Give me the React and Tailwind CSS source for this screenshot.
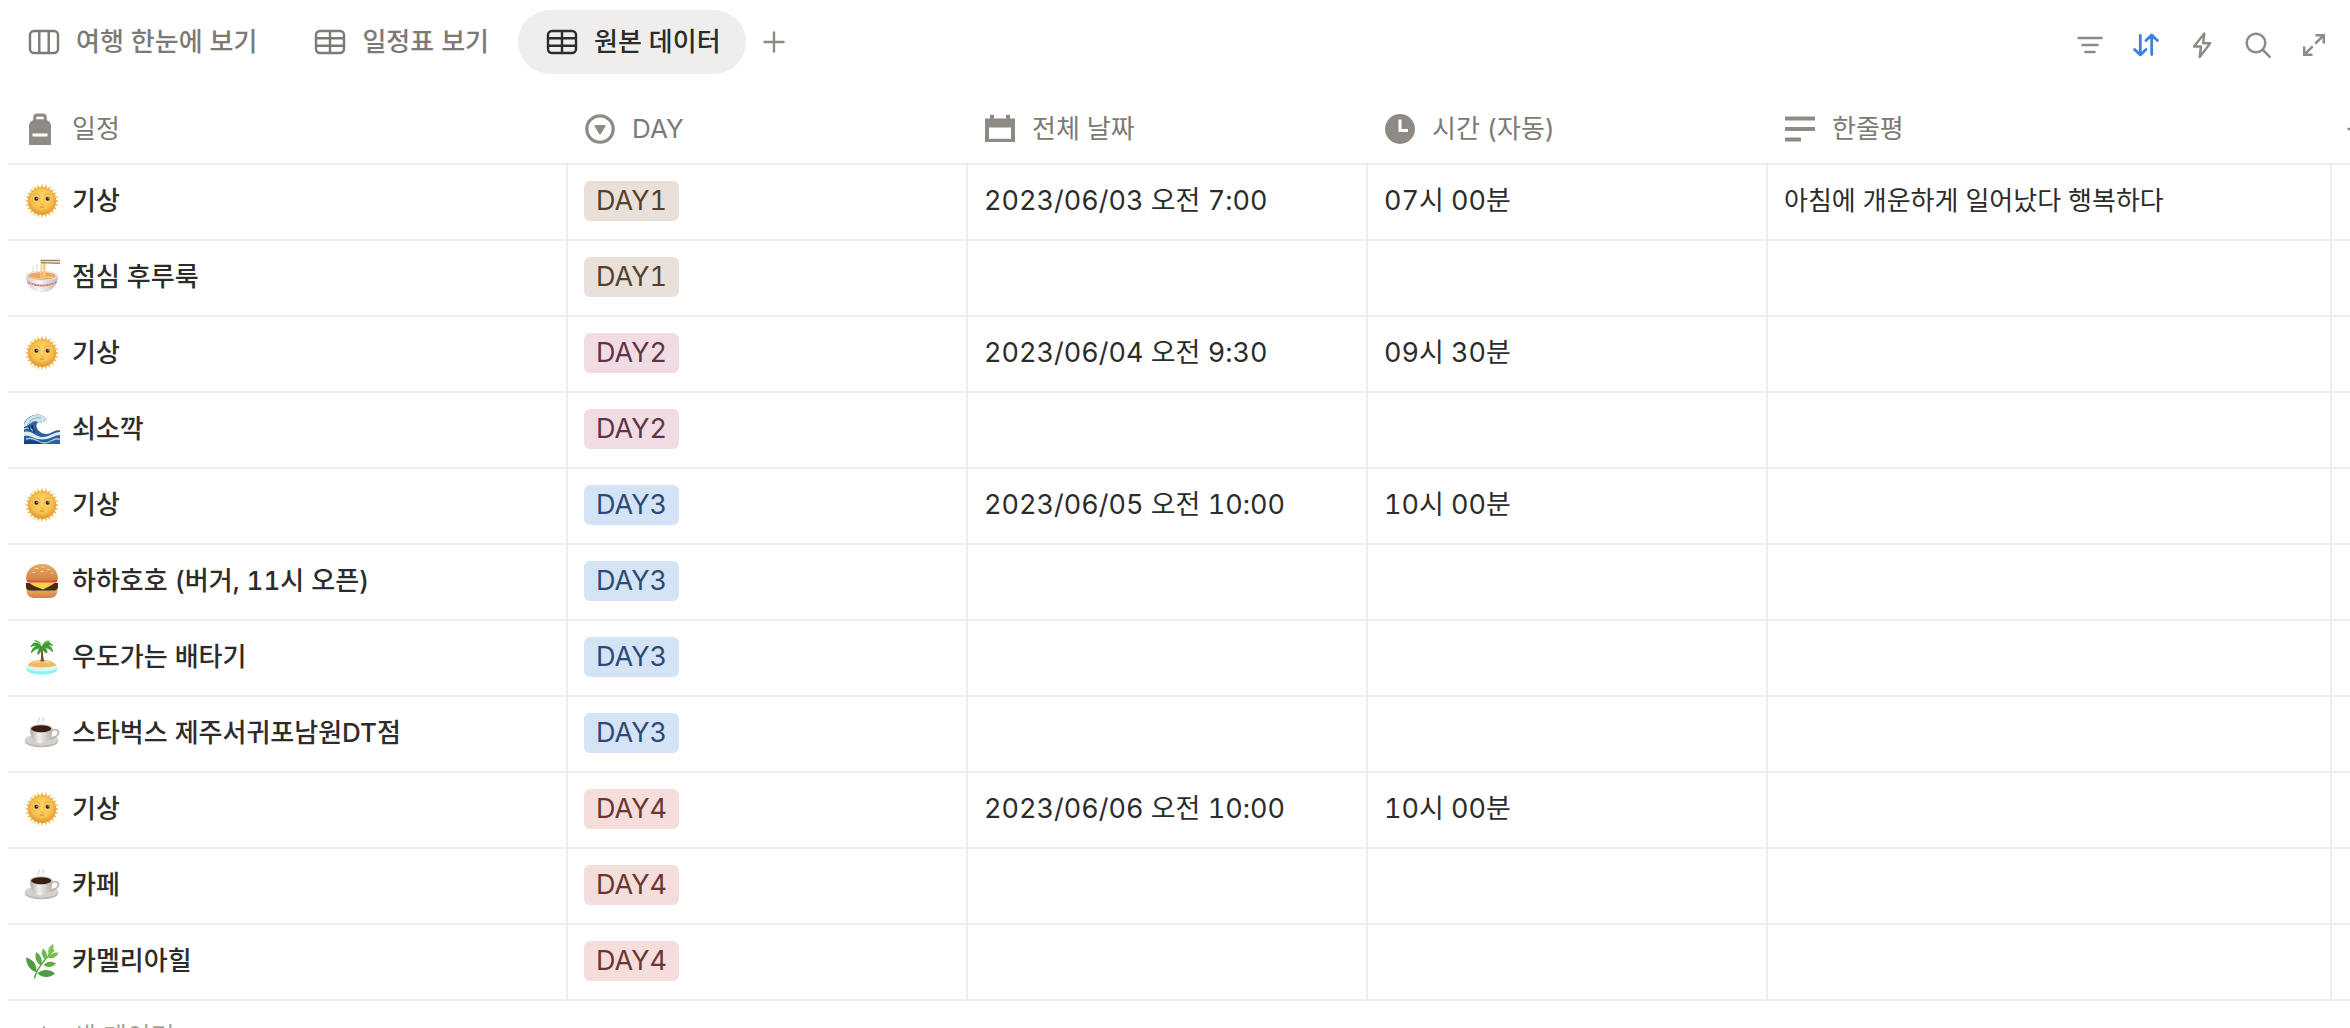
import { useState } from "react";

// ---------- VIEW TAB ICONS ----------
const BoardIcon = () => (
    <svg className="size-8 shrink-0" viewBox="0 0 32 32" fill="none" stroke="currentColor" strokeWidth="2.4">
        <rect x="2" y="5" width="28" height="22" rx="4" />
        <path d="M11.3 5v22M20.7 5v22" />
    </svg>
);

const TableIcon = () => (
    <svg className="size-8 shrink-0" viewBox="0 0 32 32" fill="none" stroke="currentColor" strokeWidth="2.4">
        <rect x="2" y="5" width="28" height="22" rx="4" />
        <path d="M2 12.3h28M2 19.7h28M16 5v22" />
    </svg>
);

const PlusIcon = () => (
    <svg className="size-6 shrink-0" viewBox="0 0 24 24" fill="none" stroke="currentColor" strokeWidth="2.4" strokeLinecap="round">
        <path d="M12 2.5v19M2.5 12h19" />
    </svg>
);

// ---------- TOOLBAR ICONS ----------
const FilterIcon = () => (
    <svg className="size-8" viewBox="0 0 32 32" fill="none" stroke="currentColor" strokeWidth="2.6" strokeLinecap="round">
        <path d="M4.5 9h23M8.5 16h15M11.500 23h9" />
    </svg>
);

const SortIcon = () => (
    <svg className="size-8" viewBox="0 0 32 32" fill="none" stroke="currentColor" strokeWidth="2.8" strokeLinecap="round" strokeLinejoin="round">
        <path d="M10.300 6.500v19M4.600 20.500l5.700 5.400 5.700-5.400M21.700 25.500v-19M16 11.500l5.700-5.400 5.700 5.400" />
    </svg>
);

const BoltIcon = () => (
    <svg className="size-8" viewBox="0 0 32 32" fill="none" stroke="currentColor" strokeWidth="2.4" strokeLinejoin="round">
        <path d="M18.300 4.500L8 17.500h7l-1.300 10.500L24.200 14.200h-7z" />
    </svg>
);

const SearchIcon = () => (
    <svg className="size-8" viewBox="0 0 32 32" fill="none" stroke="currentColor" strokeWidth="2.5" strokeLinecap="round">
        <circle cx="14" cy="14" r="9.300" />
        <path d="M21 21l6.800 6.800" />
    </svg>
);

const ExpandIcon = () => (
    <svg className="size-8" viewBox="0 0 32 32" fill="none" stroke="currentColor" strokeWidth="2.500">
        <path d="M17.500 6.200h8.300v8.300M25.500 6.500l-8.200 8.200M14.500 25.800H6.200v-8.300M6.500 25.500l8.200-8.200" />
    </svg>
);

// ---------- COLUMN ICONS ----------
const BagIcon = () => (
    <svg className="size-8 shrink-0" viewBox="0 0 32 32" fill="#8f8b84">
        <path
            fillRule="evenodd"
            d="M5 32V12.500c0-2 1.200-3.500 3-4.800L9.200 7V4.500C9.200 2 11 .5 13 .5h6c2.300 0 3.800 1.600 3.800 4V7l1.200.7c1.800 1.300 3 2.800 3 4.800V32zM12.200 6.300h7.600V4.800c0-.7-.3-1-1-1h-5.600c-.7 0-1 .3-1 1zM8.500 20.500v3h15v-3z"
        />
    </svg>
);

const SelectIcon = () => (
    <svg className="size-8 shrink-0" viewBox="0 0 32 32" fill="none" stroke="#8f8b84" strokeWidth="3.2">
        <circle cx="16" cy="16" r="13.200" />
        <path d="M11.500 13h9L16 20.500z" fill="#8f8b84" strokeWidth="2" strokeLinejoin="round" />
    </svg>
);

const CalendarIcon = () => (
    <svg className="size-8 shrink-0" viewBox="0 0 32 32" fill="#8f8b84">
        <path fillRule="evenodd" d="M1 5.500h5V1.800h4v3.700h12V1.800h4v3.700h5V29H1zM5 14.500V25.800h22V14.500z" />
    </svg>
);

const ClockIcon = () => (
    <svg className="size-8 shrink-0" viewBox="0 0 32 32">
        <circle cx="16" cy="16" r="15" fill="#8f8b84" />
        <path d="M16 6.500v11h8" fill="none" stroke="#fff" strokeWidth="3" />
    </svg>
);

const TextIcon = () => (
    <svg className="size-8 shrink-0" viewBox="0 0 32 32" fill="none" stroke="#8f8b84" strokeWidth="3.800">
        <path d="M1 5.500h30M1 16h30M1 26.500h16" />
    </svg>
);

// ---------- PAGE EMOJI ----------
const rays = Array.from({ length: 24 }, (_, i) => i * 15);

const Sun = () => (
    <svg className="size-9 shrink-0" viewBox="0 0 36 36">
        <defs>
            <radialGradient id="sunFace" cx="50%" cy="42%" r="55%">
                <stop offset="0" stopColor="#fddc70" />
                <stop offset="0.7" stopColor="#f8c04c" />
                <stop offset="1" stopColor="#e39a38" />
            </radialGradient>
        </defs>
        {rays.map((deg) => (
            <path key={deg} d="M16.300 5.500L18 .8l1.700 4.700z" fill="#f4b848" transform={`rotate(${deg} 18 18)`} />
        ))}
        <circle cx="18" cy="18" r="13.600" fill="url(#sunFace)" stroke="#e0a044" strokeWidth="0.600" />
        <path d="M9 12.300c1.500-1.600 4.500-1.800 6.200-.4.900 1.500 1 4.500.8 7.500M27 12.300c-1.500-1.600-4.500-1.800-6.200-.4-.9 1.500-1 4.500-.8 7.500" fill="none" stroke="#dfa040" strokeWidth="0.800" />
        <circle cx="12.400" cy="15.800" r="2" fill="#2b2530" />
        <circle cx="23.600" cy="15.800" r="2" fill="#2b2530" />
        <circle cx="13" cy="15.200" r="0.600" fill="#fff" />
        <circle cx="24.200" cy="15.200" r="0.600" fill="#fff" />
        <path d="M16.500 20.800q1.500.8 3 0" fill="none" stroke="#dc9a3c" strokeWidth="0.700" />
        <path d="M15.300 23.800q2.700-.8 5.400 0-2.700 2.400-5.400 0z" fill="#dd9044" />
    </svg>
);

const Noodles = () => (
    <svg className="size-9 shrink-0" viewBox="0 0 36 36">
        <defs>
            <linearGradient id="bowl" x1="0" y1="0" x2="1" y2="0">
                <stop offset="0" stopColor="#c9c9cc" />
                <stop offset="0.400" stopColor="#f7f7f8" />
                <stop offset="1" stopColor="#bdbdc1" />
            </linearGradient>
        </defs>
        <path d="M9 13c-2-2 2-3 0-6M13 11c-2-2 1-3 0-6" fill="none" stroke="#dededf" strokeWidth="1.300" />
        <path d="M2 16.500C2 27 9 33.500 18 33.500S34 27 34 16.500z" fill="url(#bowl)" />
        <ellipse cx="18" cy="16.500" rx="16" ry="4.800" fill="#e5e5e7" />
        <ellipse cx="18" cy="17" rx="13.800" ry="3.800" fill="#f0a565" />
        <path d="M6 18q6 2.500 12 1t12-.5" fill="none" stroke="#f8c98b" strokeWidth="1.200" />
        <path d="M3 22q15 7.500 30 0l-.4 2q-14.600 7.200-29.200 0z" fill="#d0706b" />
        <path d="M3.500 23q14.500 7.300 29 0" fill="none" stroke="#f3d3cf" strokeWidth="0.900" strokeDasharray="1.500 1.500" />
        <path d="M17.500 2.500l-.6 16M19.400 2.500l.2 17M21 3l-.3 14" fill="none" stroke="#f0d274" strokeWidth="1.500" />
        <path d="M16.500.8H36v1.500H16.500zM17 3l19 .4V5l-19-.8z" fill="#a4805a" />
    </svg>
);

const Wave = () => (
    <svg className="size-9 shrink-0" viewBox="0 0 36 36">
        <path d="M0 33V12C4 5 11 2.500 16.500 4c3.500 1 6 3 6.500 5.500l-3-1 1.500 3-4-2 .5 2.700-3.500-1.200c-3 2-2.500 6 .5 9 4 4 9.500 3.500 13.500 1 3-1.700 5.500-2 7.500-1.500V33z" fill="#2d5f9e" />
        <path d="M0 13C4 5.500 10 3 16.500 4c3.500 1 6 3 6.500 5.500l-3-1 1.500 3-4-2 .5 2.700-3.500-1.200c-2.500-1-5-1-7 1C5 13.500 3 15 0 16z" fill="#cfe3e8" />
        <path d="M5 10.500q6-5 12-3.500M3 14q3-3 7-3.700" fill="none" stroke="#7fa9b8" strokeWidth="0.900" />
        <path d="M0 21c4-1 7 0 11 2.500S19 27 24 25s8-4 12-4v3c-5 0-8 3-13 4S13 28.500 9 26.500 3 24.500 0 25z" fill="#d9ecef" />
        <path d="M0 18c3-1.500 6-1 9 1.500M2 28q6-2 12 2t13 0 9-1" fill="none" stroke="#a9cede" strokeWidth="1.400" />
        <path d="M0 30q8-2 15 1l4 2H0z" fill="#163f7e" />
        <path d="M8 14c0 3 1 5 3.500 7.500M5 15.500c0 2 1 3.500 2 4.500" fill="none" stroke="#16376b" strokeWidth="1.400" />
    </svg>
);

const Burger = () => (
    <svg className="size-9 shrink-0" viewBox="0 0 36 36">
        <defs>
            <linearGradient id="bun" x1="0" y1="0" x2="0" y2="1">
                <stop offset="0" stopColor="#eda865" />
                <stop offset="1" stopColor="#cf8044" />
            </linearGradient>
        </defs>
        <path d="M2.500 27c0 5 3 8 8 8h15c5 0 8-3 8-8z" fill="url(#bun)" />
        <path d="M1.500 25l3 3.500 3-1.500 3.500 2.500 3.500-2 3.500 2.500 3.500-2.500 3.500 2 3.500-2.500 3 1.500 3-3.500z" fill="#8cc850" />
        <path d="M2 20h32v4c0 2-2 3.500-4 3.500H6c-2 0-4-1.500-4-3.500z" fill="#4d2718" />
        <path d="M3 18.500h30L26 23l-7 3.500L10 23z" fill="#fcd045" />
        <rect x="2.500" y="16" width="31" height="3.500" rx="1.700" fill="#dc5540" />
        <path d="M2 16.500C2 7 8.500 1 18 1s16 6 16 15.500c-9 1.800-23 1.800-32 0z" fill="url(#bun)" />
        <path d="M12 5.500h1.600M18 4h1.600M23.500 6.500h1.600M17 8.500h1.600M9 9.500h1.600M27 10h1.600" stroke="#f9dfae" strokeWidth="1.200" strokeLinecap="round" />
    </svg>
);

const Island = () => (
    <svg className="size-9 shrink-0" viewBox="0 0 36 36">
        <ellipse cx="18" cy="30" rx="15.500" ry="5.800" fill="#8af3f3" />
        <ellipse cx="18" cy="28" rx="15" ry="4.500" fill="#d2faf6" />
        <path d="M3.500 26.500c3-4.500 9-5.500 14.500-5.500s11.500 1 14.500 5.500c-8 2.500-21 2.500-29 0z" fill="#f3b65a" />
        <path d="M9 24q9-3 17 0" fill="none" stroke="#fbd796" strokeWidth="1.300" />
        <path d="M16.700 8h2.300c-.5 5 .2 10 1.300 14.500h-3.800c.8-5 .8-10 .2-14.500z" fill="#76512f" />
        <path d="M17.500 8C14 2.500 9 3 7 7.500c3-1.500 5-1.500 7-.5-3 0-6 2.500-6.500 6.500 3-3 5.500-4.500 8.500-4.500-1.500 1.500-2.500 4-2 6.500 2.500-2 3.500-4.500 4-7 1 3 2.500 4.500 5 5.500 0-2.500-1-4.500-2.500-5.500 3 0 5.500 1.500 8 4-.5-4-3-6.500-6-6.500 2-1 4-.5 6 .8C27 3 21.500 1.500 17.500 8z" fill="#3f9a35" stroke="#3f9a35" strokeWidth="1" />
        <path d="M17.500 7C17 3 13 0 9 2c3 .5 6 2 8.500 5zM18 7c1-4 5-7 9-4.500-3 .2-6 1.500-9 4.500z" fill="#6cc04a" />
    </svg>
);

const Coffee = () => (
    <svg className="size-9 shrink-0" viewBox="0 0 36 36">
        <defs>
            <linearGradient id="cup" x1="0" y1="0" x2="1" y2="0">
                <stop offset="0" stopColor="#a9a7a1" />
                <stop offset="0.400" stopColor="#f2f1ee" />
                <stop offset="1" stopColor="#b0aea8" />
            </linearGradient>
        </defs>
        <path d="M15 8c-3-2 2-3 0-6M19 7c-2-2 2-2 0-5" fill="none" stroke="#d9d9d9" strokeWidth="1.300" />
        <ellipse cx="17.500" cy="26" rx="16.800" ry="6.300" fill="#b9b7b0" />
        <ellipse cx="17.500" cy="25" rx="16.500" ry="5.800" fill="#d3d1cb" />
        <path d="M27 16c3-2.500 7.500-1.500 7.500 1.500S30 23.500 25.500 24" fill="none" stroke="#b9b7b1" strokeWidth="1.800" />
        <path d="M6 13.500c0 8 3.500 15 11 15s11.500-7 11.500-15z" fill="url(#cup)" />
        <ellipse cx="17.200" cy="13.500" rx="11.300" ry="4.200" fill="#cfcdc8" />
        <ellipse cx="17.200" cy="13.800" rx="10.200" ry="3.500" fill="#3b1d12" />
    </svg>
);

const Herb = () => (
    <svg className="size-9 shrink-0" viewBox="0 0 36 36">
        <path d="M10.500 35.500C11.500 29 18 19 30 7" fill="none" stroke="#5da33a" strokeWidth="1.500" />
        <path d="M12.500 29C7 28 2.500 23 2 14.500 8.500 16 13 21 12.500 29z" fill="#4f9b42" />
        <path d="M17 22.500c-4.500-2.500-6.500-7-5-13.500 5 3 7 8 5 13.500z" fill="#5fac46" />
        <path d="M21.500 17c-3.500-3-4.500-7-2.500-11.500 4 3 5 7.500 2.500 11.500z" fill="#6cb84c" />
        <path d="M24.500 12c-1-4.500 0-8.500 4.500-11 1.500 4.500 0 8.500-4.500 11z" fill="#7ec652" />
        <path d="M24 15c2-4 6-6 10.500-5.500-1.500 4.500-5.500 6.500-10.500 5.500z" fill="#72be4c" />
        <path d="M19.500 22c3-3.500 8-4.500 12.500-1.500-3.500 4-8.500 4.500-12.500 1.500z" fill="#5fac46" />
        <path d="M13.500 30.500c4-4 11.500-5 17.500 0-5.500 5-12.500 4.500-17.500 0z" fill="#4f9b42" />
    </svg>
);

// ---------- DATA ----------
const views = [
    { label: "여행 한눈에 보기", Icon: BoardIcon },
    { label: "일정표 보기", Icon: TableIcon },
    { label: "원본 데이터", Icon: TableIcon },
];

const tools = [
    { label: "필터", Icon: FilterIcon },
    { label: "정렬", Icon: SortIcon, active: true },
    { label: "자동화", Icon: BoltIcon },
    { label: "검색", Icon: SearchIcon },
    { label: "전체 화면", Icon: ExpandIcon },
];

const columns = [
    { label: "일정", Icon: BagIcon },
    { label: "DAY", Icon: SelectIcon },
    { label: "전체 날짜", Icon: CalendarIcon },
    { label: "시간 (자동)", Icon: ClockIcon },
    { label: "한줄평", Icon: TextIcon },
];

const dayColors = {
    DAY1: "bg-[#e9e0da] text-[#54412f]",
    DAY2: "bg-[#f2dce3] text-[#5f3349]",
    DAY3: "bg-[#d5e3f6] text-[#2b4a75]",
    DAY4: "bg-[#f4dddb] text-[#693631]",
};

const rows = [
    { Icon: Sun, title: "기상", day: "DAY1", date: "2023/06/03 오전 7:00", time: "07시 00분", note: "아침에 개운하게 일어났다 행복하다" },
    { Icon: Noodles, title: "점심 후루룩", day: "DAY1" },
    { Icon: Sun, title: "기상", day: "DAY2", date: "2023/06/04 오전 9:30", time: "09시 30분" },
    { Icon: Wave, title: "쇠소깍", day: "DAY2" },
    { Icon: Sun, title: "기상", day: "DAY3", date: "2023/06/05 오전 10:00", time: "10시 00분" },
    { Icon: Burger, title: "하하호호 (버거, 11시 오픈)", day: "DAY3" },
    { Icon: Island, title: "우도가는 배타기", day: "DAY3" },
    { Icon: Coffee, title: "스타벅스 제주서귀포남원DT점", day: "DAY3" },
    { Icon: Sun, title: "기상", day: "DAY4", date: "2023/06/06 오전 10:00", time: "10시 00분" },
    { Icon: Coffee, title: "카페", day: "DAY4" },
    { Icon: Herb, title: "카멜리아힐", day: "DAY4" },
];

const cell = "h-[76px] border-b-2 border-r-2 border-[#eeeeed] px-4 pt-4 align-top whitespace-nowrap";

const App = () => {
    const [view, setView] = useState("원본 데이터");

    return (
        <div className="h-screen overflow-hidden bg-white font-['Inter','Noto_Sans_CJK_KR',sans-serif] text-[26px] leading-10 text-[#2c2c2b] tabular-nums">
            {/* VIEW BAR */}
            <div className="flex items-center justify-between pt-[10px] pr-2">
                <div className="flex items-center gap-1">
                    {views.map(({ label, Icon }) => (
                        <button
                            key={label}
                            onClick={() => setView(label)}
                            className={`flex h-16 items-center gap-4 rounded-full pr-[25px] pl-7 font-medium ${
                                view === label ? "bg-[#efeeec]" : "text-[#7d7a75]"
                            }`}
                        >
                            <Icon />
                            {label}
                        </button>
                    ))}
                    <button aria-label="보기 추가" className="p-3 text-[#8f8b84]">
                        <PlusIcon />
                    </button>
                </div>

                <div className="flex pt-1.5">
                    {tools.map(({ label, Icon, active }) => (
                        <button
                            key={label}
                            aria-label={label}
                            className={`p-3 ${active ? "text-[#3f80da]" : "text-[#8f8b84]"}`}
                        >
                            <Icon />
                        </button>
                    ))}
                </div>
            </div>

            {/* TABLE */}
            <div className="mt-5 pl-2">
                <table className="w-full table-fixed border-separate border-spacing-0">
                    <colgroup>
                        <col className="w-140" />
                        <col className="w-100" />
                        <col className="w-100" />
                        <col className="w-100" />
                        <col className="w-141" />
                        <col />
                    </colgroup>
                    <thead>
                        <tr>
                            {columns.map(({ label, Icon }) => (
                                <th key={label} className="h-[71px] border-b-2 border-[#eeeeed] px-4 font-normal text-[#7d7a75]">
                                    <div className="flex items-center gap-4">
                                        <Icon />
                                        {label}
                                    </div>
                                </th>
                            ))}
                            <td className="border-b-2 border-[#eeeeed] pl-3.5">
                                <button aria-label="속성 추가" className="flex text-[#8f8b84]">
                                    <PlusIcon />
                                </button>
                            </td>
                        </tr>
                    </thead>
                    <tbody>
                        {rows.map(({ Icon, title, day, date, time, note }, i) => (
                            <tr key={i}>
                                <td className={`${cell} font-medium`}>
                                    <div className="flex items-center gap-3">
                                        <Icon />
                                        {title}
                                    </div>
                                </td>
                                <td className={cell}>
                                    <div className="flex">
                                        <span className={`rounded-md px-3 text-[27px] ${dayColors[day]}`}>{day}</span>
                                    </div>
                                </td>
                                <td className={`${cell} text-[27px]`}>{date}</td>
                                <td className={`${cell} text-[27px]`}>{time}</td>
                                <td className={cell}>{note}</td>
                                <td className="border-b-2 border-[#eeeeed]" />
                            </tr>
                        ))}
                    </tbody>
                </table>

                {/* NEW ROW */}
                <button className="flex h-18 items-center gap-4 px-6 text-[#a5a29d]">
                    <PlusIcon />새 데이터
                </button>
            </div>
        </div>
    );
};

export default App;
